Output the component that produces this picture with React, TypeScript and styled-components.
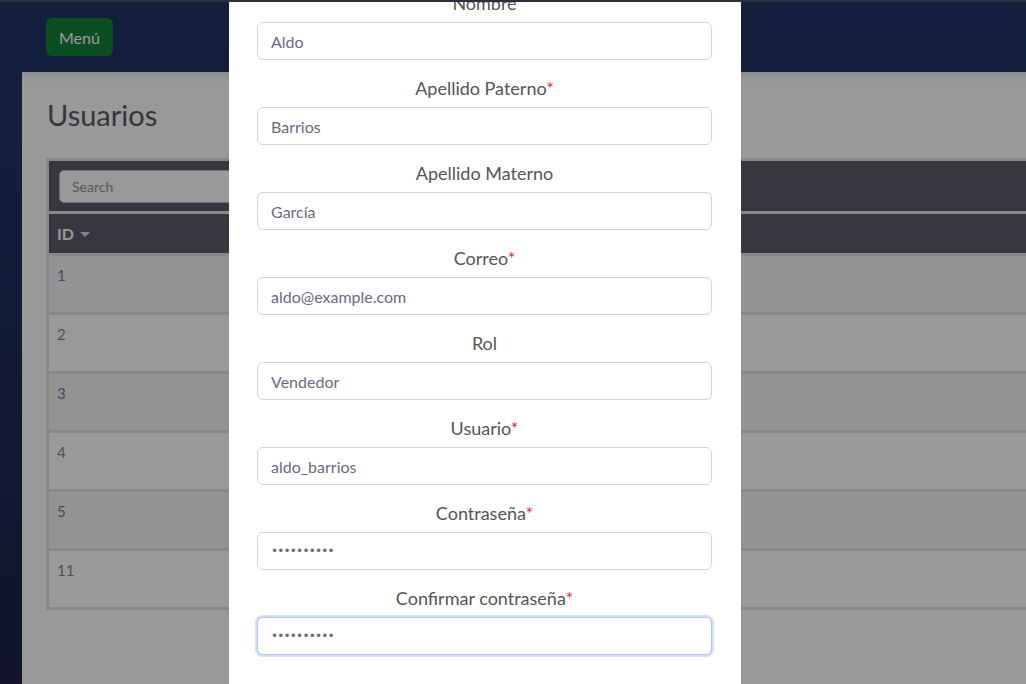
import { useEffect, useRef } from "react";
import styled, { createGlobalStyle } from "styled-components";

const GlobalStyle = createGlobalStyle`
  * { box-sizing: border-box; }
  html, body { margin: 0; height: 100%; }
  body {
    font-family: Lato, "Open Sans", "Noto Sans", sans-serif;
    overflow: hidden;
  }
  #root { height: 100%; }
`;

const Shell = styled.div`
  height: 100vh;
  display: flex;
  flex-direction: column;
`;
const TopEdge = styled.div`
  height: 2px;
  flex-shrink: 0;
  background: #2e2f3e;
`;
const Viewport = styled.div`
  flex: 1;
  position: relative;
  overflow: hidden;
`;
const Page = styled.div`
  height: 100%;
  display: flex;
  flex-direction: column;
  background: linear-gradient(180deg, #203467 0%, #1f3163 30%, #1b2146 100%);
`;
const Navbar = styled.nav`
  height: 70px;
  flex-shrink: 0;
  display: flex;
  align-items: center;
  padding-left: 46px;
`;
const MenuButton = styled.button`
  height: 38px;
  padding: 0 13px;
  border: none;
  border-radius: 6px;
  background: #128239;
  color: #fff;
  font-family: inherit;
  font-size: 16px;
`;
const Main = styled.main`
  flex: 1;
  margin-left: 22px;
  background: #fff;
  box-shadow: inset 0 10px 10px -8px rgba(0, 0, 0, 0.12);
  padding: 25px 0 0 24px;
`;
const Title = styled.h2`
  margin: 0 0 25px 1px;
  font-size: 29px;
  font-weight: 400;
  line-height: 36px;
  color: #5a5a66;
`;
const Table = styled.div`
  border: 3px solid #e3e3e3;
  border-right: none;
  display: flex;
  flex-direction: column;
  gap: 3px;
  background: #e3e3e3;
`;
const Toolbar = styled.div`
  height: 50px;
  background: #5d5c69;
  display: flex;
  align-items: center;
  padding-left: 10px;
`;
const Search = styled.input`
  width: 360px;
  height: 33px;
  border: 1px solid #b5b5bd;
  border-radius: 5px;
  padding: 0 12px;
  font-family: inherit;
  font-size: 14px;
  background: #fff;
  &::placeholder { color: #8d92a6; }
`;
const HeaderRow = styled.div`
  height: 39px;
  background: #5d5c69;
  display: flex;
  align-items: center;
  gap: 6px;
  padding-left: 8px;
  color: #fff;
  font-weight: 700;
  font-size: 16px;
`;
const Caret = styled.span`
  width: 0;
  height: 0;
  border-left: 5px solid transparent;
  border-right: 5px solid transparent;
  border-top: 5px solid #d6d6de;
  margin-top: 1px;
`;
const Row = styled.div<{ $odd: boolean }>`
  height: 56px;
  background: ${(p) => (p.$odd ? "#f5f5f5" : "#ffffff")};
  padding: 10px 0 0 8px;
  font-size: 15px;
  color: ${(p) => (p.$odd ? "#6f7fa6" : "#8a8296")};
`;

const Backdrop = styled.div`
  position: absolute;
  inset: 0;
  background: rgba(0, 0, 0, 0.4);
  display: flex;
  padding-left: 229px;
`;
const Modal = styled.div`
  width: 512px;
  height: 100%;
  background: #fff;
  overflow-y: auto;
  scrollbar-width: none;
  &::-webkit-scrollbar { display: none; }
`;
const Form = styled.form`
  padding: 16px 29px 40px 28px;
  display: flex;
  flex-direction: column;
`;
const Field = styled.div`
  display: flex;
  flex-direction: column;
  margin-bottom: 16px;
`;
const Label = styled.label`
  text-align: center;
  font-size: 18px;
  line-height: 24px;
  color: #555;
  margin-bottom: 7px;
`;
const Required = styled.span`
  color: #e8262b;
`;
const Input = styled.input<{ $focused?: boolean }>`
  height: 38px;
  border: 1px solid ${(p) => (p.$focused ? "#b3c3f3" : "#d3d3e6")};
  border-radius: 6px;
  padding: 0 13px;
  font-family: inherit;
  font-size: 16px;
  color: #6b6b7f;
  outline: none;
  box-shadow: ${(p) => (p.$focused ? "0 0 0 2px #d5defa" : "none")};
  &[type="password"] {
    font-family: "DejaVu Sans", sans-serif;
    font-size: 12px;
    letter-spacing: -0.8px;
  }
`;

const fields = [
  { label: "Nombre", value: "Aldo" },
  { label: "Apellido Paterno", value: "Barrios", required: true },
  { label: "Apellido Materno", value: "García" },
  { label: "Correo", value: "aldo@example.com", required: true },
  { label: "Rol", value: "Vendedor" },
  { label: "Usuario", value: "aldo_barrios", required: true },
  { label: "Contraseña", value: "contrasena", required: true, password: true },
  {
    label: "Confirmar contraseña",
    value: "contrasena",
    required: true,
    password: true,
    focused: true,
  },
];

const ids = [1, 2, 3, 4, 5, 11];

export default function App() {
  const modalRef = useRef<HTMLDivElement>(null);

  useEffect(() => {
    if (modalRef.current) modalRef.current.scrollTop = 27;
  }, []);

  return (
    <>
      <GlobalStyle />
      <Shell>
        <TopEdge />
        <Viewport>
          <Page>
            <Navbar>
              <MenuButton>Menú</MenuButton>
            </Navbar>
            <Main>
              <Title>Usuarios</Title>
              <Table>
                <Toolbar>
                  <Search placeholder="Search" />
                </Toolbar>
                <HeaderRow>
                  ID <Caret />
                </HeaderRow>
                {ids.map((id, i) => (
                  <Row key={id} $odd={i % 2 === 0}>
                    {id}
                  </Row>
                ))}
              </Table>
            </Main>
          </Page>
          <Backdrop>
            <Modal ref={modalRef}>
              <Form onSubmit={(e) => e.preventDefault()}>
                {fields.map((f) => (
                  <Field key={f.label}>
                    <Label>
                      {f.label}
                      {f.required && <Required>*</Required>}
                    </Label>
                    <Input
                      type={f.password ? "password" : "text"}
                      defaultValue={f.value}
                      $focused={f.focused}
                      readOnly
                    />
                  </Field>
                ))}
              </Form>
            </Modal>
          </Backdrop>
        </Viewport>
      </Shell>
    </>
  );
}
